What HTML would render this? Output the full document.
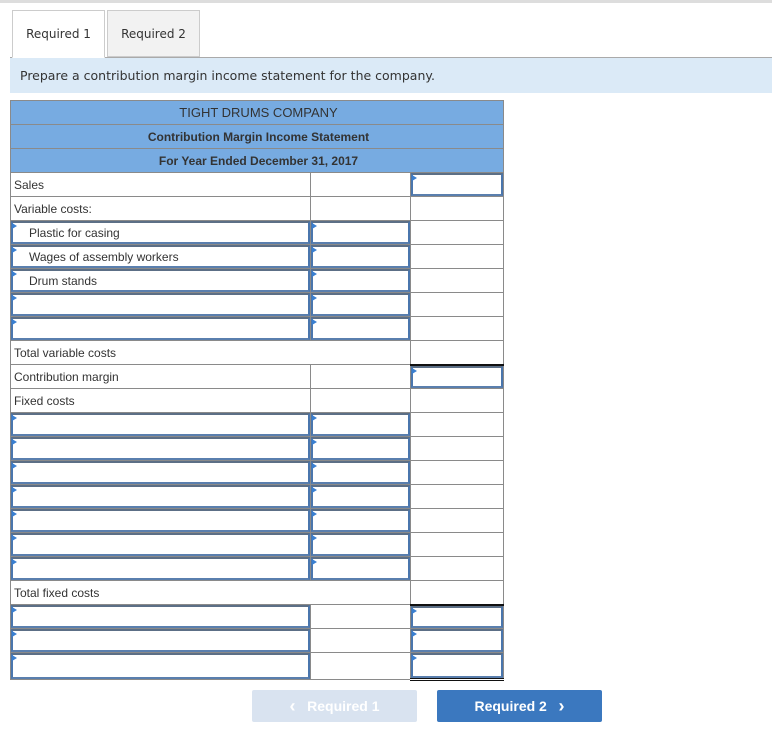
<!DOCTYPE html>
<html><head><style>
*{box-sizing:border-box;margin:0;padding:0}
body{width:772px;height:739px;background:#fff;font-family:"Liberation Sans",sans-serif;position:relative;overflow:hidden}
.top{position:absolute;left:0;top:0;width:772px;height:3px;background:#ddd}
.tab{position:absolute;top:10px;height:48px;width:93px;border:1px solid #ccc;font-family:"DejaVu Sans",sans-serif;font-size:12px;color:#333;text-align:center;line-height:46px}
.line{position:absolute;left:10px;top:57px;width:762px;height:1px;background:#aaa}
.band{position:absolute;left:10px;top:58px;width:762px;height:35px;background:#dbeaf7;font-family:"DejaVu Sans",sans-serif;font-size:12.5px;color:#333;padding-left:10px;line-height:36px}
table{position:absolute;left:10px;top:100px;border-collapse:collapse;table-layout:fixed;width:493px}
td{border:1px solid #8a8a8a;height:24px;font-size:12px;color:#333;padding:0 0 0 3px;position:relative}
td.h{background:#77abe1;text-align:center;font-weight:bold;color:#333;font-size:12px}
td.h1{font-weight:normal;font-size:13px}
.in{position:absolute;left:0;top:0;right:0;bottom:0;border:2px solid #4a76ad;border-top-color:#5c6f86;border-bottom-color:#5a7fae}
.in:before{content:"";position:absolute;left:-1px;top:0;border-left:5px solid #3a7fd0;border-top:3px solid transparent;border-bottom:3px solid transparent}
.ind{padding-left:18px}
.btn{position:absolute;top:690px;height:32px;width:165px;font-weight:bold;font-size:14px;color:#fff;text-align:center;line-height:32px;border-radius:2px}
.btn b{font-size:18px;font-weight:bold;vertical-align:top}
</style></head><body>
<div class="top"></div>
<div class="tab" style="left:12px;background:#fff;border-bottom-color:#fff;z-index:2">Required 1</div>
<div class="tab" style="left:107px;background:#f2f2f2;height:47px">Required 2</div>
<div class="line"></div>
<div class="band">Prepare a contribution margin income statement for the company.</div>
<table>
<colgroup><col style="width:300px"><col style="width:100px"><col style="width:93px"></colgroup>
<tr><td class="h h1" colspan="3">TIGHT DRUMS COMPANY</td></tr>
<tr><td class="h" colspan="3">Contribution Margin Income Statement</td></tr>
<tr><td class="h" colspan="3">For Year Ended December 31, 2017</td></tr>
<tr><td>Sales</td><td></td><td><div class="in"></div></td></tr>
<tr><td>Variable costs:</td><td></td><td></td></tr>
<tr><td class="ind"><div class="in"></div><span style="position:relative">Plastic for casing</span></td><td><div class="in"></div></td><td></td></tr>
<tr><td class="ind"><div class="in"></div><span style="position:relative">Wages of assembly workers</span></td><td><div class="in"></div></td><td></td></tr>
<tr><td class="ind"><div class="in"></div><span style="position:relative">Drum stands</span></td><td><div class="in"></div></td><td></td></tr>
<tr><td><div class="in"></div></td><td><div class="in"></div></td><td></td></tr>
<tr><td><div class="in"></div></td><td><div class="in"></div></td><td></td></tr>
<tr><td colspan="2">Total variable costs</td><td style="border-bottom:2px solid #111"></td></tr>
<tr><td>Contribution margin</td><td></td><td><div class="in"></div></td></tr>
<tr><td>Fixed costs</td><td></td><td></td></tr>
<tr><td><div class="in"></div></td><td><div class="in"></div></td><td></td></tr>
<tr><td><div class="in"></div></td><td><div class="in"></div></td><td></td></tr>
<tr><td><div class="in"></div></td><td><div class="in"></div></td><td></td></tr>
<tr><td><div class="in"></div></td><td><div class="in"></div></td><td></td></tr>
<tr><td><div class="in"></div></td><td><div class="in"></div></td><td></td></tr>
<tr><td><div class="in"></div></td><td><div class="in"></div></td><td></td></tr>
<tr><td><div class="in"></div></td><td><div class="in"></div></td><td></td></tr>
<tr><td colspan="2">Total fixed costs</td><td></td></tr>
<tr><td><div class="in"></div></td><td></td><td style="border-top:2px solid #111"><div class="in"></div></td></tr>
<tr><td><div class="in"></div></td><td></td><td><div class="in"></div></td></tr>
<tr><td style="height:27px"><div class="in"></div></td><td style="height:27px"></td><td style="height:27px;border-bottom:3px double #111"><div class="in"></div></td></tr>
</table>
<div class="btn" style="left:252px;background:#d9e3f0"><b>&#8249;</b>&nbsp;&nbsp; Required 1</div>
<div class="btn" style="left:437px;background:#3b78bf">Required 2 &nbsp;&nbsp;<b>&#8250;</b></div>
</body></html>
